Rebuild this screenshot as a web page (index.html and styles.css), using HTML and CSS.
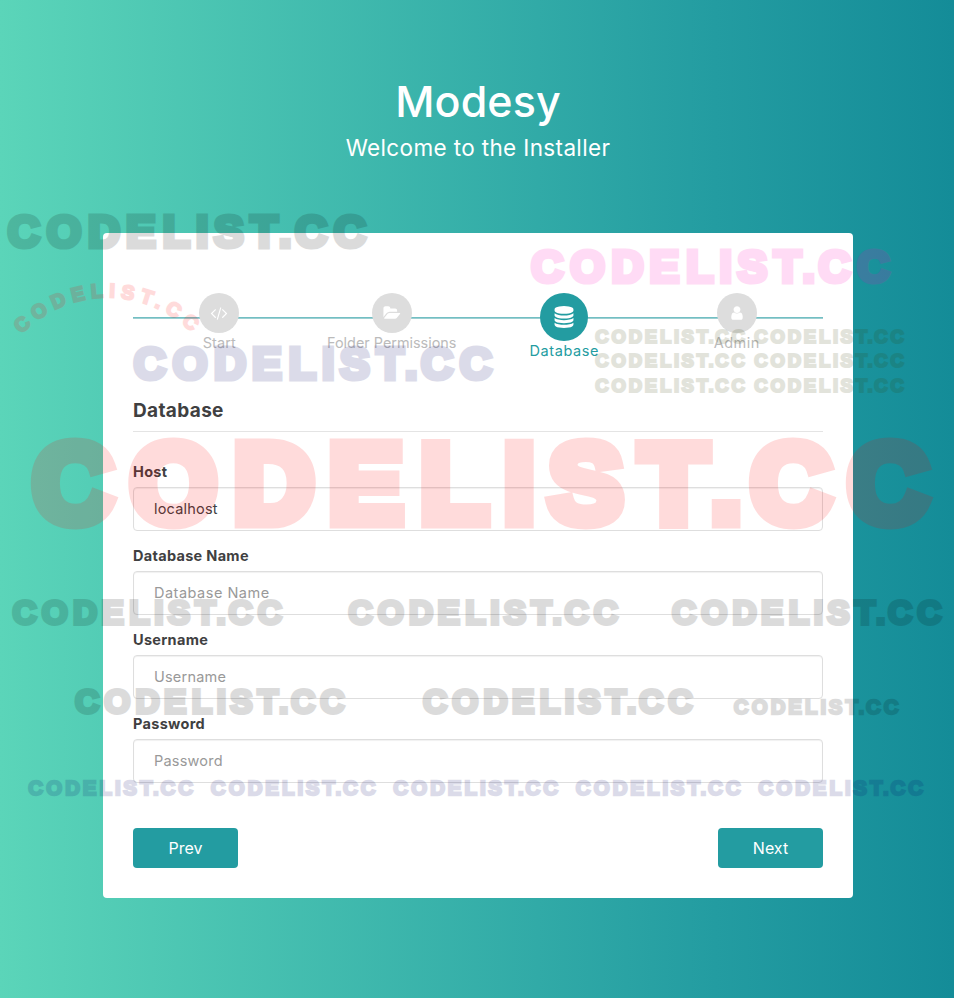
FILE: index.html
```html
<!DOCTYPE html>
<html lang="en">
<head>
<meta charset="utf-8">
<title>Modesy - Installer</title>
<link rel="stylesheet" href="styles.css">
</head>
<body>
<main class="installer">
  <header class="heading">
    <h1 class="title">Modesy</h1>
    <p class="subtitle">Welcome to the Installer</p>
  </header>
  <section class="card">
    <ol class="steps">
      <li class="step">
        <span class="step-icon"><svg viewBox="0 0 1792 1792"><path d="M553 1399l-50 50q-10 10-23 10t-23-10l-466-466q-10-10-10-23t10-23l466-466q10-10 23-10t23 10l50 50q10 10 10 23t-10 23l-393 393 393 393q10 10 10 23t-10 23zm591-1067l-373 1291q-4 13-15.5 19.5t-23.5 2.5l-62-17q-13-4-19.5-15.5t-2.5-24.5l373-1291q4-13 15.5-19.5t23.5-2.5l62 17q13 4 19.5 15.5t2.5 24.5zm657 651l-466 466q-10 10-23 10t-23-10l-50-50q-10-10-10-23t10-23l393-393-393-393q-10-10-10-23t10-23l50-50q10-10 23-10t23 10l466 466q10 10 10 23t-10 23z"/></svg></span>
        <span class="step-label label-start">Start</span>
      </li>
      <li class="step">
        <span class="step-icon"><svg viewBox="0 0 1792 1792"><path d="M1815 952q0 31-31 66l-336 396q-43 51-120.5 86.5t-143.5 35.5h-1088q-34 0-60.5-13t-26.5-43q0-31 31-66l336-396q43-51 120.5-86.5t143.5-35.5h1088q34 0 60.5 13t26.5 43zm-343-344v160h-832q-94 0-197 47.5t-164 119.5l-337 396-5 6q0-4-.5-12.5t-.5-12.5v-960q0-92 66-158t158-66h320q92 0 158 66t66 158v32h544q92 0 158 66t66 158z"/></svg></span>
        <span class="step-label label-folder">Folder Permissions</span>
      </li>
      <li class="step active">
        <span class="step-icon"><svg viewBox="0 0 1792 1792"><path d="M896 768q237 0 443-43t325-127v170q0 69-103 128t-280 93.5-385 34.5-385-34.5-280-93.5-103-128v-170q119 84 325 127t443 43zm0 768q237 0 443-43t325-127v170q0 69-103 128t-280 93.5-385 34.5-385-34.5-280-93.5-103-128v-170q119 84 325 127t443 43zm0-384q237 0 443-43t325-127v170q0 69-103 128t-280 93.5-385 34.5-385-34.5-280-93.5-103-128v-170q119 84 325 127t443 43zm0-1152q208 0 385 34.5t280 93.5 103 128v128q0 69-103 128t-280 93.5-385 34.5-385-34.5-280-93.5-103-128v-128q0-69 103-128t280-93.5 385-34.5z"/></svg></span>
        <span class="step-label label-database">Database</span>
      </li>
      <li class="step">
        <span class="step-icon"><svg viewBox="0 0 1792 1792"><path d="M1536 1399q0 109-62.5 187t-150.5 78h-854q-88 0-150.5-78t-62.5-187q0-85 8.5-160.5t31.5-152 58.5-131 94-89 134.5-34.5q131 128 313 128t313-128q76 0 134.5 34.5t94 89 58.5 131 31.5 152 8.5 160.5zm-256-887q0 159-112.5 271.5t-271.5 112.5-271.5-112.5-112.5-271.5 112.5-271.5 271.5-112.5 271.5 112.5 112.5 271.5z"/></svg></span>
        <span class="step-label label-admin">Admin</span>
      </li>
    </ol>
    <form class="form">
      <h2 class="form-title">Database</h2>
      <label class="field"><span class="field-label">Host</span><input class="input" type="text" value="localhost"></label>
      <label class="field"><span class="field-label">Database Name</span><input class="input wide" type="text" placeholder="Database Name"></label>
      <label class="field"><span class="field-label">Username</span><input class="input" type="text" placeholder="Username"></label>
      <label class="field"><span class="field-label">Password</span><input class="input" type="text" placeholder="Password"></label>
      <div class="actions">
        <button class="button" type="button">Prev</button>
        <button class="button" type="button">Next</button>
      </div>
    </form>
  </section>
</main>
<svg class="marks" viewBox="0 0 954 998">
  <defs><path id="arc" d="M21.5 334 A119 119 0 0 1 197 338"/></defs>
  <text class="black" transform="translate(7.7 248.5) scale(.4)" x="0 97.5 201 296 387.5 471 516 607 678 718 815" y="-5">CODELIST.CC</text>
  <text class="pink" transform="translate(531.2 283.5) scale(.4)" x="0 97.5 201 296 387.5 471 516 607 678 718 815" y="-5">CODELIST.CC</text>
  <text class="navy" transform="translate(133.7 380.5) scale(.4)" x="0 97.5 201 296 387.5 471 516 607 678 718 815" y="-5">CODELIST.CC</text>
  <text class="red arc"><textPath href="#arc" textLength="189">CODELIST.CC</textPath></text>
  <text class="olive" transform="translate(595.3 343.7) scale(.167)" x="0 97.5 201 296 387.5 471 516 607 678 718 815" y="-5">CODELIST.CC</text>
  <text class="olive" transform="translate(754.3 343.7) scale(.167)" x="0 97.5 201 296 387.5 471 516 607 678 718 815" y="-5">CODELIST.CC</text>
  <text class="olive" transform="translate(595.3 368.2) scale(.167)" x="0 97.5 201 296 387.5 471 516 607 678 718 815" y="-5">CODELIST.CC</text>
  <text class="olive" transform="translate(754.3 368.2) scale(.167)" x="0 97.5 201 296 387.5 471 516 607 678 718 815" y="-5">CODELIST.CC</text>
  <text class="olive" transform="translate(595.3 393.2) scale(.167)" x="0 97.5 201 296 387.5 471 516 607 678 718 815" y="-5">CODELIST.CC</text>
  <text class="olive" transform="translate(754.3 393.2) scale(.167)" x="0 97.5 201 296 387.5 471 516 607 678 718 815" y="-5">CODELIST.CC</text>
  <text class="red" transform="translate(32.7 527)" x="0 97.5 201 296 387.5 471 516 607 678 718 815" y="-5">CODELIST.CC</text>
  <text class="black" transform="translate(12.5 625.5) scale(.301)" x="0 97.5 201 296 387.5 471 516 607 678 718 815" y="-5">CODELIST.CC</text>
  <text class="black" transform="translate(348.5 625.5) scale(.301)" x="0 97.5 201 296 387.5 471 516 607 678 718 815" y="-5">CODELIST.CC</text>
  <text class="black" transform="translate(672 625.5) scale(.301)" x="0 97.5 201 296 387.5 471 516 607 678 718 815" y="-5">CODELIST.CC</text>
  <text class="black" transform="translate(75 714.5) scale(.301)" x="0 97.5 201 296 387.5 471 516 607 678 718 815" y="-5">CODELIST.CC</text>
  <text class="black" transform="translate(423 714.5) scale(.301)" x="0 97.5 201 296 387.5 471 516 607 678 718 815" y="-5">CODELIST.CC</text>
  <text class="black" transform="translate(733.8 714.7) scale(.184)" x="0 97.5 201 296 387.5 471 516 607 678 718 815" y="-5">CODELIST.CC</text>
  <text class="navy" transform="translate(28.3 795.7) scale(.184)" x="0 97.5 201 296 387.5 471 516 607 678 718 815" y="-5">CODELIST.CC</text>
  <text class="navy" transform="translate(210.8 795.7) scale(.184)" x="0 97.5 201 296 387.5 471 516 607 678 718 815" y="-5">CODELIST.CC</text>
  <text class="navy" transform="translate(393.3 795.7) scale(.184)" x="0 97.5 201 296 387.5 471 516 607 678 718 815" y="-5">CODELIST.CC</text>
  <text class="navy" transform="translate(575.8 795.7) scale(.184)" x="0 97.5 201 296 387.5 471 516 607 678 718 815" y="-5">CODELIST.CC</text>
  <text class="navy" transform="translate(758.3 795.7) scale(.184)" x="0 97.5 201 296 387.5 471 516 607 678 718 815" y="-5">CODELIST.CC</text>
</svg>
</body>
</html>
```
FILE: styles.css
```css
* { box-sizing: border-box; }

body {
  margin: 0;
  min-height: 998px;
  position: relative;
  overflow: hidden;
  background: linear-gradient(to right, #5bd5b9 0%, #239ca1 75%, #148c98 100%);
  color: #404041;
  font-family: Inter, "Open Sans", sans-serif;
  font-size: 14px;
}

.installer { padding: 78px 101px 100px 103px; }

.heading { height: 155px; text-align: center; color: #fff; }
.title { margin: 0; font-size: 43px; line-height: 46px; font-weight: 500; letter-spacing: .1px; }
.subtitle { margin: 12px 0 0; font-size: 22.5px; line-height: 24px; letter-spacing: .36px; }

.card {
  width: 750px;
  height: 665px;
  padding: 60px 30px 30px;
  border-radius: 4px;
  background: #fff;
}

.steps {
  display: flex;
  height: 86px;
  margin: 0;
  padding: 0;
  list-style: none;
  background: linear-gradient(#72bfc3 50%, #9ccfd2 50%) 0 24px / 100% 2px no-repeat;
}
.step { flex: 1; display: flex; flex-direction: column; align-items: center; color: #bbb; }
.step-icon {
  display: flex;
  align-items: center;
  justify-content: center;
  width: 40px;
  height: 40px;
  border-radius: 50%;
  background: #ddd;
}
.step-icon svg { width: 16px; height: 16px; fill: #fff; overflow: visible; }
.step-label { font-size: 14.5px; line-height: 20px; white-space: nowrap; }
.label-folder { font-size: 14.4px; }
.label-start { letter-spacing: .1px; }
.label-database { letter-spacing: .6px; }
.label-admin { letter-spacing: .45px; }
.active { color: #239ca1; }
.active .step-icon { width: 48px; height: 48px; background: #239ca1; }
.active svg { width: 22px; height: 22px; }

.form-title {
  height: 53px;
  margin: 0 0 30px;
  padding-top: 20px;
  border-bottom: 1px solid #e4e4e4;
  font-size: 19px;
  line-height: 24px;
  font-weight: 700;
  letter-spacing: .35px;
}
.field { display: block; height: 84px; }
.field-label { display: block; height: 25px; font-size: 14.5px; line-height: 20px; font-weight: 700; letter-spacing: .3px; }
.input {
  display: block;
  width: 100%;
  height: 44px;
  padding: 0 20px 2px;
  border: 1px solid #dedede;
  border-radius: 4px;
  background: transparent;
  box-shadow: inset 0 1px 1px rgba(0, 0, 0, .06);
  color: #404041;
  font: inherit;
  font-size: 14.5px;
  letter-spacing: .2px;
}
.wide { letter-spacing: .5px; }
.input::placeholder { color: #999; opacity: 1; }

.actions { display: flex; justify-content: space-between; margin-top: 30px; }
.button {
  width: 105px;
  height: 40px;
  padding: 0;
  border: 0;
  border-radius: 4px;
  background: #239ca1;
  color: #fff;
  font: 16px/40px Inter, "Open Sans", sans-serif;
}

.marks { position: absolute; left: 0; top: 0; width: 954px; height: 998px; pointer-events: none; }
.marks text {
  font-family: "Liberation Sans", Arial, sans-serif;
  font-weight: 700;
  font-size: 111px;
  stroke-width: 13px;
  opacity: .137;
}
.marks .arc { font-size: 19.5px; stroke-width: 2.2px; }
.black { fill: #000; stroke: #000; }
.navy { fill: #000064; stroke: #000064; }
.pink { fill: #ff00b8; stroke: #ff00b8; }
.olive { fill: #323c00; stroke: #323c00; }
.red { fill: #f00; stroke: #f00; }
```
